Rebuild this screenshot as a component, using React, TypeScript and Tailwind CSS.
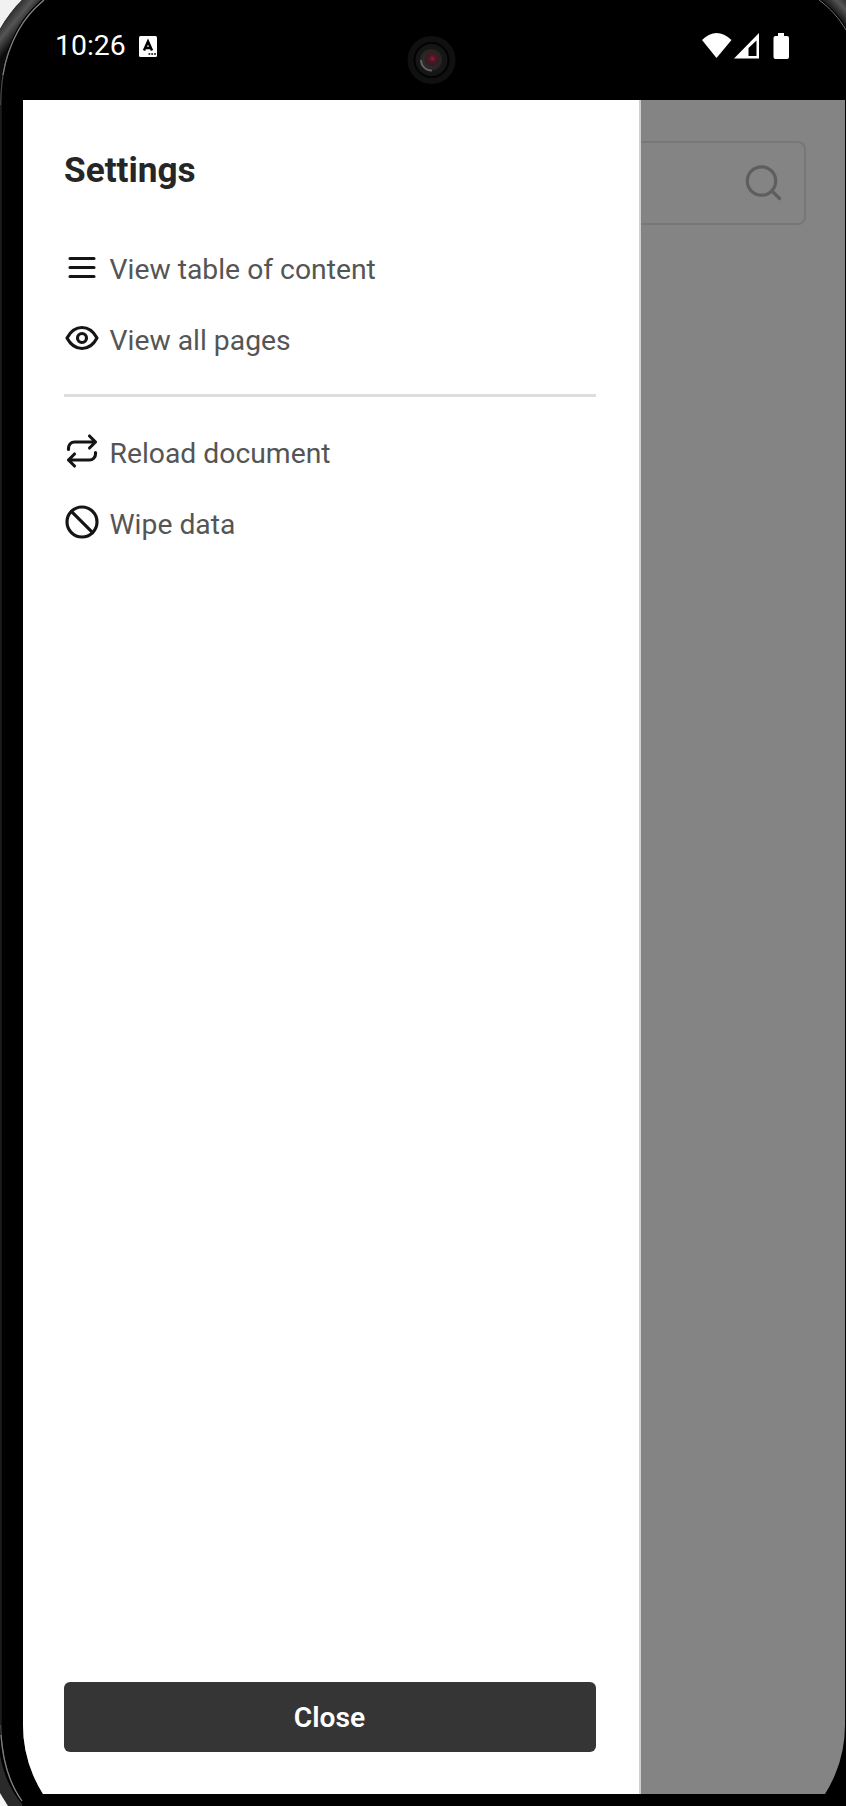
import React from "react";

function Icon({ children }: { children: React.ReactNode }) {
  return (
    <svg className="mb-[2px] size-9 shrink-0" viewBox="0 0 24 24" fill="none" stroke="#151515" strokeWidth="2.1" strokeLinecap="round" strokeLinejoin="round">
      {children}
    </svg>
  );
}

function Item({ icon, label }: { icon: React.ReactNode; label: string }) {
  return (
    <li className="flex h-[71px] items-center gap-[9.5px]">
      <Icon>{icon}</Icon>
      <span className="pt-[5px] text-[28.3px] leading-9 whitespace-nowrap text-[#555]">{label}</span>
    </li>
  );
}

function Bezel() {
  return (
    <svg className="absolute inset-0" width="846" height="1806" viewBox="0 0 846 1806">
      <defs>
        <linearGradient id="rim" gradientUnits="userSpaceOnUse" x1="10" y1="12" x2="27" y2="26">
          <stop offset="0" stopColor="#2a2a2a" />
          <stop offset="0.45" stopColor="#555" />
          <stop offset="1" stopColor="#0c0c0c" />
        </linearGradient>
        <linearGradient id="rimRight" gradientUnits="userSpaceOnUse" x1="833" y1="12" x2="846" y2="0">
          <stop offset="0" stopColor="#141414" />
          <stop offset="0.6" stopColor="#555" />
          <stop offset="1" stopColor="#333" />
        </linearGradient>
        <radialGradient id="lens" cx="0.55" cy="0.45" r="0.5">
          <stop offset="0" stopColor="#8c2040" />
          <stop offset="0.35" stopColor="#501426" />
          <stop offset="0.75" stopColor="#30201c" />
          <stop offset="1" stopColor="#2b2b2b" />
        </radialGradient>
      </defs>
      <path d="M0 0H22C14 8 6 18 0 29Z" fill="#f1f1f1" />
      <path d="M22 0H41C20 18 4 45 0 90V29C6 18 14 8 22 0Z" fill="url(#rim)" />
      <path d="M44 0C32 10 24 20 18 31C8 49 1 70 .7 105V1725C1 1755 8 1782 22 1801" fill="none" stroke="#4c4c4c" strokeWidth="1.2" />
      <path d="M44 0C32 10 24 20 18 31C11 44 6 56 3 75M1 1735C3 1762 9 1783 22 1801" fill="none" stroke="#808080" strokeWidth="1.2" />
      <path d="M0 105V1725" stroke="#1c1c1c" strokeWidth="2" />
      <path d="M0 1755C4 1776 11 1791 22 1804V1806H8L0 1793Z" fill="#2a2a2a" />
      <path d="M0 1793L8 1806H0Z" fill="#f5f5f5" />
      <path d="M821 0C832 8 840 17 846 27V0Z" fill="url(#rimRight)" />
      <path d="M819 0C830 8 839 18 846 30" fill="none" stroke="#777" strokeWidth="1" />
      <circle cx="431.500" cy="60" r="24" fill="#101010" />
      <circle cx="431.500" cy="60" r="17" fill="#161616" stroke="#030303" strokeWidth="2" />
      <circle cx="431" cy="60" r="11" fill="#252525" />
      <path d="M421 60A10.500 10.500 0 0 0 432 70.500" fill="none" stroke="#606060" strokeWidth="2" />
      <circle cx="431.500" cy="59.500" r="9" fill="url(#lens)" />
    </svg>
  );
}

export default function App() {
  return (
    <div className="relative flex h-[1806px] w-[846px] flex-col overflow-hidden bg-black font-['Roboto',sans-serif]">
      <Bezel />
      <header className="relative flex h-[100px] items-start justify-between pt-7 pr-14 pl-[55px] text-white">
        <div className="flex items-center gap-[13px]">
          <span className="text-[28.4px] leading-9">10:26</span>
          <svg width="18" height="21" viewBox="0 0 18 21">
            <rect width="18" height="21" rx="1.500" fill="#fff" />
            <path d="M5 14.500L9 5.500L13 14.500M6.500 12H11.500" fill="none" stroke="#000" strokeWidth="2.500" />
            <path d="M9.500 18H17" stroke="#000" strokeWidth="1.600" strokeDasharray="1.800 1" />
          </svg>
        </div>
        <svg className="mt-[5px]" width="88" height="27" viewBox="0 0 88 27" fill="#fff">
          <path d="M0 7Q14.500-7 29.500 7L14.500 25Z" />
          <path fillRule="evenodd" d="M32 25.500L57 0V25.500ZM46.500 23H54.500V7.500L46.500 15Z" />
          <path d="M76 0H82V3H85Q87 3 87 5V24Q87 26 85 26H73.500Q71.500 26 71.500 24V5Q71.500 3 73.500 3H76Z" />
        </svg>
      </header>
      <div className="relative ml-[23px] h-[1694px] w-[822px] overflow-hidden">
        <main className="flex h-[1754px] overflow-hidden rounded-b-[129px] bg-[#848484]">
          <aside className="flex w-[618px] shrink-0 flex-col border-r-2 border-[#cfcfcf] bg-white pr-[43px] pl-[41px]">
            <h1 className="mt-[49px] text-[35.2px] leading-[42px] font-bold text-[#262626]">Settings</h1>
            <ul className="mt-[41px]">
              <Item label="View table of content" icon={<path d="M4 6.300H20M4 12.300H20M4 18.300H20" />} />
              <Item
                label="View all pages"
                icon={
                  <>
                    <path d="M2 12C4.500 7.300 7.900 5 12 5S19.500 7.300 22 12C19.500 16.700 16.100 19 12 19S4.500 16.700 2 12Z" />
                    <circle cx="12" cy="12" r="3" />
                  </>
                }
              />
            </ul>
            <hr className="mt-5 h-[2.5px] border-0 bg-[#ddd]" />
            <ul className="mt-[19.5px]">
              <Item
                label="Reload document"
                icon={<path d="M3 11V10A4 4 0 0 1 7 6H21M17 2L21 6L17 10M21 13V14A4 4 0 0 1 17 18H3M7 14L3 18L7 22" />}
              />
              <Item
                label="Wipe data"
                icon={
                  <>
                    <circle cx="12" cy="12" r="10" />
                    <path d="M4.930 4.930L19.070 19.070" />
                  </>
                }
              />
            </ul>
            <button className="mt-auto mb-[102px] h-[70px] shrink-0 rounded-md bg-[#353535] pt-[2px] pr-[1px] text-[28.2px] font-semibold text-white">Close</button>
          </aside>
          <section className="flex-1 pt-[41px] pr-[39px]">
            <div className="flex h-[84px] items-center justify-end rounded-r-lg border-2 border-l-0 border-[#777] pr-5">
              <svg className="size-[42px]" viewBox="0 0 42 42" fill="none" stroke="#5e5e5e" strokeWidth="3.2" strokeLinecap="round">
                <circle cx="19.500" cy="19" r="14.200" />
                <path d="M30 29L37.500 36.500" />
              </svg>
            </div>
          </section>
        </main>
      </div>
    </div>
  );
}
